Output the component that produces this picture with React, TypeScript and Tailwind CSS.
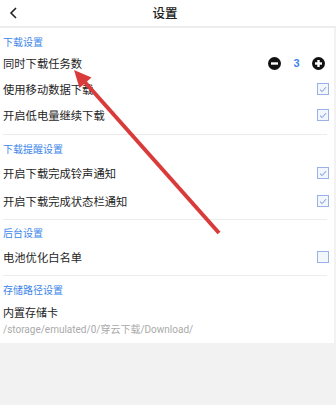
import React from "react";

const font = { fontFamily: '"Noto Sans CJK SC", "Noto Sans", sans-serif' };

function Check({ on }: { on: boolean }) {
  return (
    <div className="w-[12px] h-[12px] border border-[#99b0e8] bg-[#f2f6fd] flex items-center justify-center">
      {on && (
        <svg width="8" height="7" viewBox="0 0 8 7">
          <path d="M1 3.6 L3.1 5.6 L7 1.2" fill="none" stroke="#6f8fdc" strokeWidth="1" />
        </svg>
      )}
    </div>
  );
}

function Title({ children, pt }: { children: React.ReactNode; pt: string }) {
  return <div className={`${pt} text-[10px] leading-[12px] text-[#3d86ea]`}>{children}</div>;
}

function Row({ label, h, on }: { label: string; h: string; on: boolean }) {
  return (
    <div className={`${h} flex items-center justify-between pr-[5px]`}>
      <span className="text-[11.3px] text-[#1e1e1e]">{label}</span>
      <Check on={on} />
    </div>
  );
}

function Divider() {
  return <div className="h-px bg-[#ececec] mr-[7px]" />;
}

export default function App() {
  return (
    <div className="relative w-[336px] h-[405px] bg-[#f2f2f2] overflow-hidden" style={font}>
      <div className="h-[26px] bg-white flex items-center relative">
        <svg className="absolute left-[9px] top-[7px]" width="9" height="12" viewBox="0 0 9 12">
          <path d="M7 1 L2 6 L7 11" fill="none" stroke="#222" strokeWidth="1.6" />
        </svg>
        <div className="w-full text-center text-[12.5px] font-medium text-[#222] pr-[6px]">设置</div>
      </div>
      <div className="h-[2px] bg-[#ededed]" />
      <div className="bg-white w-[334px] pl-[3px]">
        <Title pt="pt-[8px]">下载设置</Title>
        <div className="mt-[2px] pb-[6px]">
          <div className="h-[26px] flex items-center justify-between pr-[9px]">
            <span className="text-[11.3px] text-[#1e1e1e]">同时下载任务数</span>
            <div className="flex items-center">
              <svg width="13" height="13" viewBox="0 0 13 13">
                <circle cx="6.5" cy="6.5" r="6.5" fill="#111" />
                <rect x="3" y="5.3" width="7" height="2.4" fill="#fff" />
              </svg>
              <span className="w-[31px] text-center text-[11px] font-bold text-[#3d86ea]" style={{ fontFamily: '"Liberation Sans", sans-serif' }}>3</span>
              <svg width="13" height="13" viewBox="0 0 13 13">
                <circle cx="6.5" cy="6.5" r="6.5" fill="#111" />
                <rect x="3" y="5.3" width="7" height="2.4" fill="#fff" />
                <rect x="5.3" y="3" width="2.4" height="7" fill="#fff" />
              </svg>
            </div>
          </div>
          <Row label="使用移动数据下载" h="h-[26px]" on />
          <Row label="开启低电量继续下载" h="h-[26px]" on />
        </div>
        <Divider />
        <Title pt="pt-[8px]">下载提醒设置</Title>
        <div className="mt-[4px] pb-[4px]">
          <Row label="开启下载完成铃声通知" h="h-[28px]" on />
          <Row label="开启下载完成状态栏通知" h="h-[28px]" on />
        </div>
        <Divider />
        <Title pt="pt-[7px]">后台设置</Title>
        <div className="mt-[4px] pb-[4px]">
          <Row label="电池优化白名单" h="h-[28px]" on={false} />
        </div>
        <Divider />
        <Title pt="pt-[8px]">存储路径设置</Title>
        <div className="mt-[8px] text-[11px] leading-[16px] text-[#1e1e1e]">内置存储卡</div>
        <div className="mt-[3px] pb-[6px] text-[10px] leading-[14px] text-[#aaa]" style={{ fontFamily: 'Roboto, "Noto Sans CJK SC", sans-serif' }}>
          /storage/emulated/0/穿云下载/Download/
        </div>
      </div>
      <svg className="absolute left-0 top-0 pointer-events-none" width="336" height="405" viewBox="0 0 336 405">
        <line x1="219" y1="233" x2="83" y2="80" stroke="#d93a3a" strokeWidth="4" />
        <polygon points="74,70 91.5,77.5 79.5,88" fill="#d93a3a" />
      </svg>
    </div>
  );
}
